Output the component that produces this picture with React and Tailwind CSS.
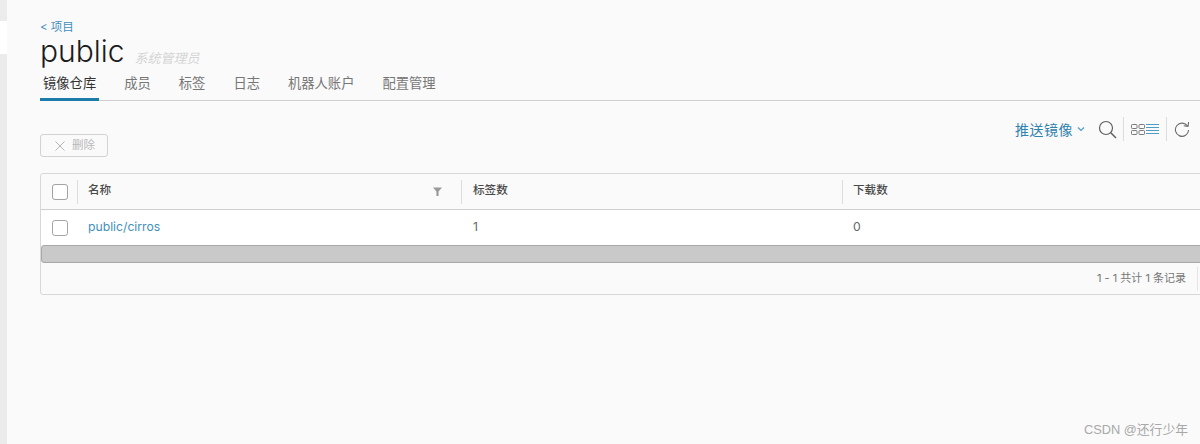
const FONT = "font-['Inter','Noto_Sans_CJK_SC',sans-serif]";

const TABS = ["镜像仓库", "成员", "标签", "日志", "机器人账户", "配置管理"];

const Checkbox = () => (
  <div className="w-[16px] h-[16px] rounded-[3px] border border-[#a3a3a3] bg-white" />
);

const Sep = () => <div className="w-px h-[24px] bg-[#dcdcdc]" />;

const SearchIcon = () => (
  <svg width="19" height="19" viewBox="0 0 19 19" fill="none" stroke="#5f5f5f" strokeWidth="1.2">
    <circle cx="8" cy="8" r="6.5" />
    <path d="M12.8 12.8L18 18" strokeWidth="1.5" />
  </svg>
);

const CardsIcon = () => (
  <svg width="14" height="11" viewBox="0 0 14 11" fill="none" stroke="#7a7a7a" strokeWidth="1">
    <rect x="0.5" y="0.5" width="5.5" height="4" rx="0.8" />
    <rect x="8" y="0.5" width="5.5" height="4" rx="0.8" />
    <rect x="0.5" y="6.5" width="5.5" height="4" rx="0.8" />
    <rect x="8" y="6.5" width="5.5" height="4" rx="0.8" />
  </svg>
);

const ListIcon = () => (
  <svg width="13" height="10" viewBox="0 0 13 10" fill="none" stroke="#4f9cc4" strokeWidth="1">
    <path d="M0 0.5H13M0 3.5H13M0 6.5H13M0 9.5H13" />
  </svg>
);

const RefreshIcon = () => (
  <svg width="16" height="16" viewBox="0 0 16 16" fill="none" stroke="#6a6a6a" strokeWidth="1.1">
    <path d="M13.6 5.2A6.6 6.6 0 1 0 14.6 9" />
    <path d="M9.8 4.8L14 5.4L14.6 1" />
  </svg>
);

export default function App() {
  return (
    <div className={`relative flex w-[1200px] h-[444px] overflow-hidden bg-[#fafafa] ${FONT}`}>
      {/* left edge of the nav */}
      <div className="flex flex-col w-[7px] shrink-0">
        <div className="h-[21px] bg-[#ececec]" />
        <div className="h-[33px] bg-white" />
        <div className="flex-1 bg-[#ebebeb]" />
      </div>

      <div className="flex-1 min-w-0 pl-[33px]">
        {/* title */}
        <div className="pt-[20px]">
          <a className="block h-[14px] text-[11.5px] leading-[14px] text-[#3f8fbb]">&lt; 项目</a>
          <div className="flex items-end h-[32px] mt-[1px]">
            <h1 className="text-[30px] leading-[32px] font-light text-[#1c1c1c]">public</h1>
            <span className="ml-[10px] text-[13px] leading-[18px] italic text-[#d4d4d4]">系统管理员</span>
          </div>
        </div>

        {/* tabs */}
        <div className="flex gap-[22px] h-[34px] border-b border-[#cfcfcf]">
          {TABS.map((t, i) => (
            <div
              key={t}
              className={
                i === 0
                  ? "px-[3px] h-[34px] text-[13.3px] leading-[33px] text-[#333] border-b-[3px] border-[#1b7cab]"
                  : "px-[3px] h-[34px] text-[13.3px] leading-[33px] text-[#767676]"
              }
            >
              {t}
            </div>
          ))}
        </div>

        {/* toolbar */}
        <div className="flex justify-between items-start h-[72px] pr-[10px]">
          <button className="flex items-center mt-[33px] w-[68px] h-[23px] pl-[14px] rounded-[3px] border border-[#d2d2d2] text-[11.5px] text-[#b8b8b8]">
            <svg width="10" height="10" viewBox="0 0 10 10" stroke="#b5b5b5" strokeWidth="1" fill="none">
              <path d="M0.5 0.5L9.5 9.5M9.5 0.5L0.5 9.5" />
            </svg>
            <span className="ml-[7px]">删除</span>
          </button>
          <div className="flex items-center h-[24px] mt-[16px]">
            <span className="text-[14px] tracking-[0.5px] text-[#2f82ad]">推送镜像</span>
            <svg className="ml-[4px] mr-[13px]" width="8" height="6" viewBox="0 0 8 6" fill="none" stroke="#4f9cc4" strokeWidth="1.2">
              <path d="M1 1.5L4 4.5L7 1.5" />
            </svg>
            <SearchIcon />
            <div className="ml-[6px] mr-[7px]"><Sep /></div>
            <CardsIcon />
            <div className="ml-[1px]"><ListIcon /></div>
            <div className="ml-[7px] mr-[7px]"><Sep /></div>
            <RefreshIcon />
          </div>
        </div>

        {/* datagrid, runs past the right edge of the window */}
        <div className="w-[1200px] h-[122px] rounded-[3px] border border-[#d8d8d8] text-[#666]">
          <div className="flex items-center h-[36px] border-b border-[#cfcfcf] text-[11.6px] font-medium text-[#4a4a4a]">
            <div className="flex items-center justify-between w-[37px] pl-[11px] shrink-0">
              <Checkbox />
              <Sep />
            </div>
            <div className="flex items-center justify-between w-[384px] pl-[10px] pb-[2px] shrink-0">
              <span>名称</span>
              <div className="flex items-center gap-[19px] mt-[2px]">
                <svg width="9" height="9" viewBox="0 0 9 9" fill="#9a9a9a">
                  <path d="M0 0.5H9L5.6 4.5V9H3.4V4.5Z" />
                </svg>
                <Sep />
              </div>
            </div>
            <div className="flex items-center justify-between w-[381px] pl-[11px] pb-[2px] shrink-0">
              <span>标签数</span>
              <div className="mt-[2px]"><Sep /></div>
            </div>
            <div className="pl-[10px] pb-[2px]">下载数</div>
          </div>

          <div className="flex items-center h-[35px] bg-white text-[12.2px]">
            <div className="w-[37px] pl-[11px] shrink-0"><Checkbox /></div>
            <div className="w-[384px] pl-[10px] pb-[1px] shrink-0 text-[#3f8fbb]">public/cirros</div>
            <div className="w-[381px] pl-[11px] pb-[1px] shrink-0">1</div>
            <div className="pl-[10px] pb-[1px]">0</div>
          </div>

          {/* horizontal scrollbar */}
          <div className="h-[18px] rounded-[3px] border border-[#a8a8a8] bg-[#c9c9c9]" />

          <div className="flex items-center justify-end h-[31px] w-[1157px] text-[11px] text-[#777]">
            <span className="mr-[11px]">1 - 1 共计 1 条记录</span>
            <div className="w-px h-[24px] bg-[#e4e4e4]" />
          </div>
        </div>
      </div>

      {/* watermark */}
      <span className="absolute right-[12px] top-[421px] text-[12.8px] leading-[18px] text-[#a8a8a8] font-['Liberation_Sans','Noto_Sans_CJK_SC',sans-serif]">CSDN @还行少年</span>
    </div>
  );
}
